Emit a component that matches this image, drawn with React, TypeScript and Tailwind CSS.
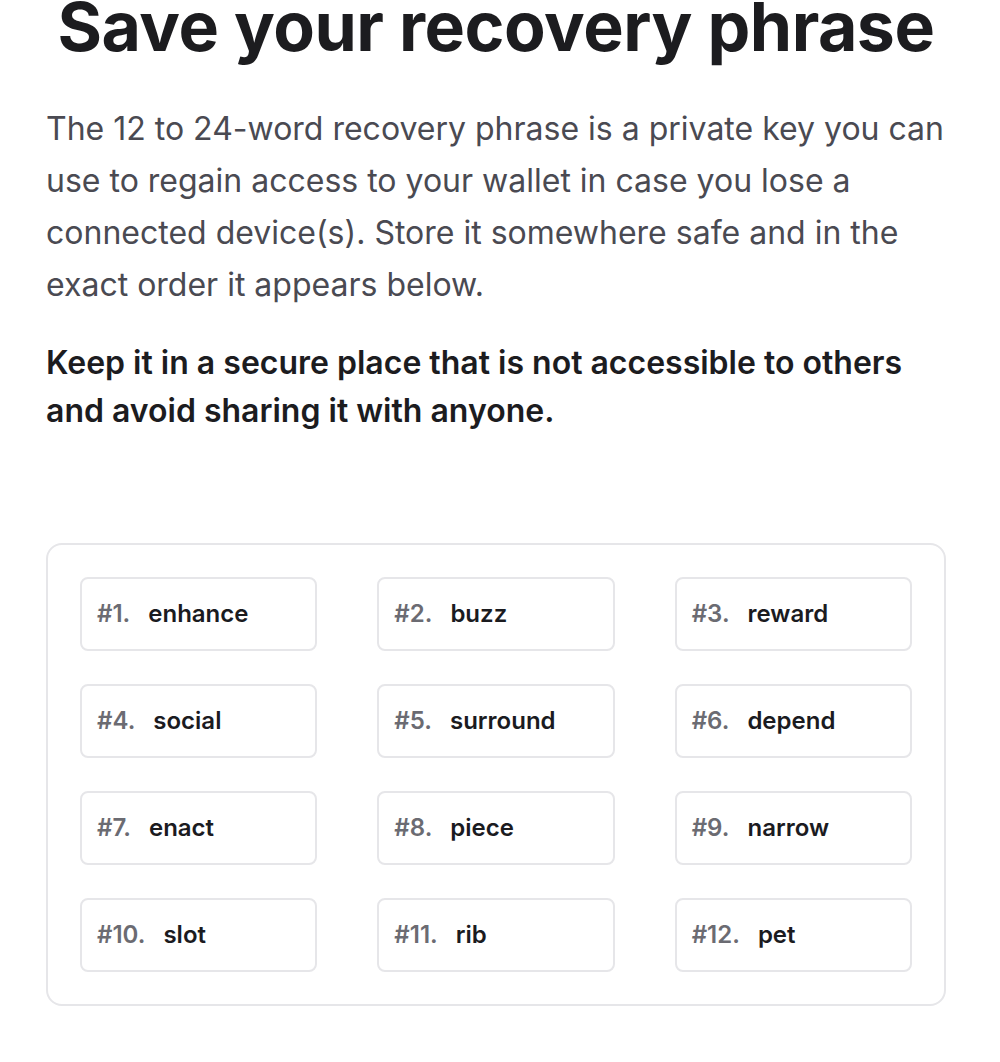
import React from 'react';

const words = [
  'enhance', 'buzz', 'reward',
  'social', 'surround', 'depend',
  'enact', 'piece', 'narrow',
  'slot', 'rib', 'pet',
];

const WordBox: React.FC<{ index: number; word: string }> = ({ index, word }) => (
  <div className="h-[74px] flex items-center px-[15px] rounded-lg border-2 border-[#e6e6e9] bg-white">
    <span className="text-[#6b6b72] font-semibold">#{index}.</span>
    <span className="ml-[18px] text-[#1b1b1f] font-semibold">{word}</span>
  </div>
);

export default function App() {
  return (
    <div className="min-h-screen bg-white" style={{ fontFamily: 'Inter, "Liberation Sans", sans-serif' }}>
      <div className="w-[900px] ml-[46px]">
        {/* Title */}
        <h1 className="text-center text-[68px] leading-[52px] font-bold text-[#1c1c1f] tracking-[-0.5px]">
          Save your recovery phrase
        </h1>

        {/* Description */}
        <p className="mt-[51px] text-[32px] leading-[52px] text-[#4a4a52]">
          The 12 to 24-word recovery phrase is a private key you can use to regain access to your wallet in case you
          lose a connected device(s). Store it somewhere safe and in the exact order it appears below.
        </p>
        <p className="mt-[28px] text-[32px] leading-[48px] font-semibold text-[#1c1c1f]">
          Keep it in a secure place that is not accessible to others and avoid sharing it with anyone.
        </p>

        {/* Phrase grid */}
        <div className="mt-[108px] p-[32px] rounded-2xl border-2 border-[#e6e6e9] grid grid-cols-3 gap-x-[60px] gap-y-[33px] text-[24px]">
          {words.map((w, i) => (
            <WordBox key={w} index={i + 1} word={w} />
          ))}
        </div>
      </div>
    </div>
  );
}
